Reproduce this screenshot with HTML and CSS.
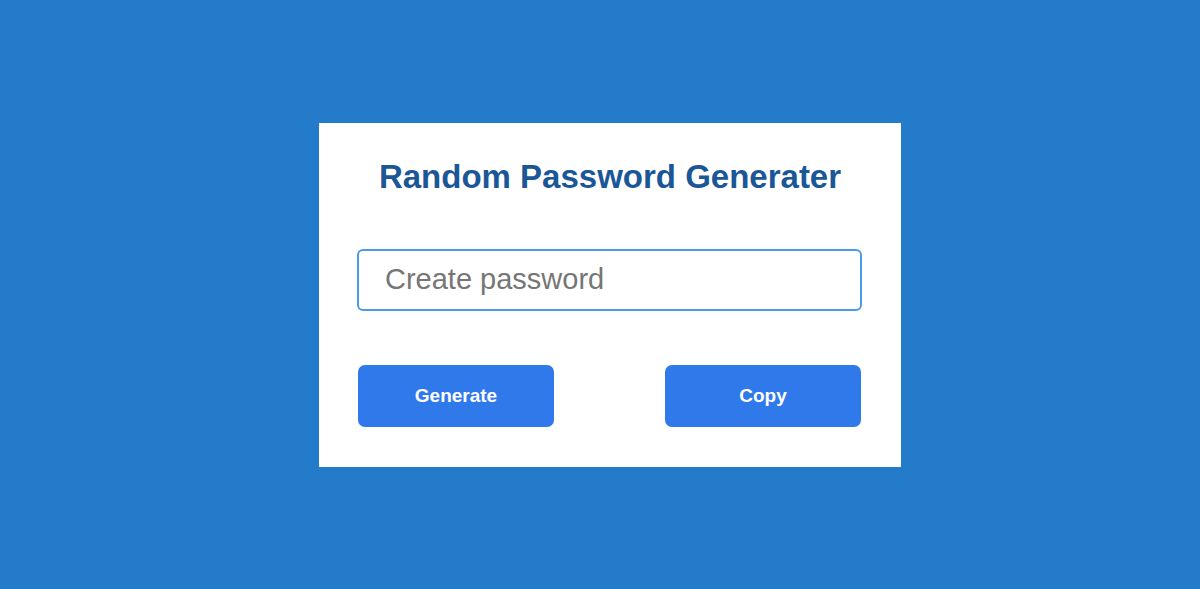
FILE: index.html
```html
<!DOCTYPE HTML>
<html>
<head>
    <title>Random Password Generater</title>
    <meta charset="utf-8">
    <link rel="stylesheet" href="styles.css">
</head>
<body>
    <div class="box">
        <h1>Random Password Generater</h1>
        <input type="text" class="password" placeholder="Create password">
        <div class="buttons">
            <button class="btn">Generate</button>
            <button class="btn">Copy</button>
        </div>
    </div>
</body>
</html>
```

FILE: styles.css
```css
body
{
    margin: 0;
    padding-left: 20px;
    min-height: 100vh;
    display: flex;
    align-items: center;
    justify-content: center;
    background: #237bca;
    font-family: "Liberation Sans", Arial, sans-serif;
}

div.box
{
    width: 506px;
    padding: 35px 38px 40px;
    background: #fff;
}

h1
{
    margin: 0 0 54px;
    font-size: 33px;
    line-height: 37px;
    text-align: center;
    color: #1b5797;
}

input.password
{
    display: block;
    box-sizing: border-box;
    width: 505px;
    height: 62px;
    margin: 0;
    padding: 0 26px;
    border: 2px solid #4c9bea;
    border-radius: 6px;
    outline: none;
    font-family: inherit;
    font-size: 29px;
    color: #333;
}

input.password::placeholder
{
    color: #767676;
}

div.buttons
{
    display: flex;
    justify-content: space-between;
    margin-top: 54px;
    padding: 0 2px 0 1px;
}

button.btn
{
    width: 196px;
    height: 62px;
    border: none;
    border-radius: 7px;
    background: #2f79ea;
    color: #fff;
    font-family: inherit;
    font-size: 19px;
    font-weight: bold;
    cursor: pointer;
}
```
